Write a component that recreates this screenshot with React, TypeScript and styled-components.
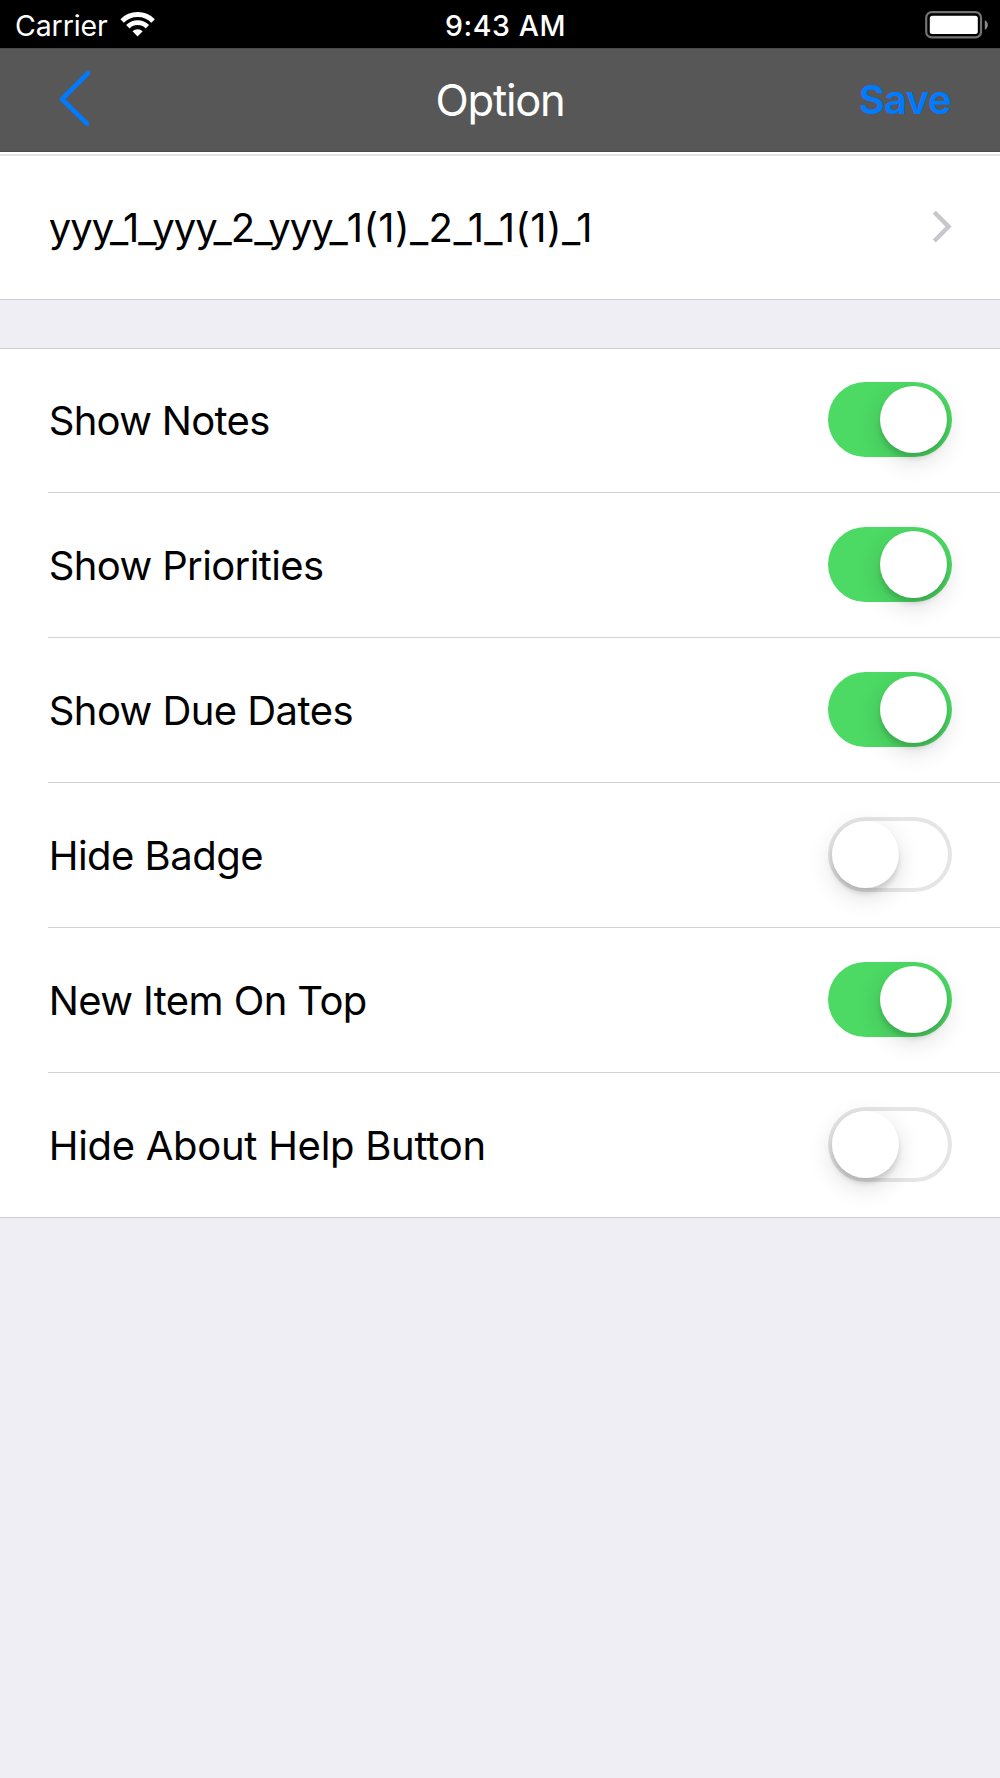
import React, { useState } from "react";
import styled, { createGlobalStyle } from "styled-components";

const GlobalStyle = createGlobalStyle`
  * { box-sizing: border-box; }
  body {
    margin: 0;
    background: #efeef4;
    font-family: Inter, "Liberation Sans", sans-serif;
    color: #000;
  }
  button {
    font: inherit;
    border: 0;
    padding: 0;
    background: none;
    display: flex;
  }
`;

const Screen = styled.div`
  width: 1000px;
  min-height: 1778px;
  display: flex;
  flex-direction: column;
  background: #efeef4;
`;

const StatusBar = styled.div`
  height: 48px;
  padding: 1px 12px 0 15px;
  display: grid;
  grid-template-columns: 1fr auto 1fr;
  align-items: center;
  background: #000;
  color: #fff;
  font-size: 28.5px;
`;

const Carrier = styled.div`
  display: flex;
  align-items: center;
  gap: 12px;
  letter-spacing: -0.1px;
  line-height: 36px;
  padding-top: 2px;
`;

const WifiIcon = styled.svg`
  display: block;
  width: 35px;
  height: 26px;
  margin-top: -3px;
`;

const Time = styled.div`
  font-weight: 500;
  letter-spacing: 0.6px;
  line-height: 36px;
  padding: 2px 0 0 8px;
`;

const BatteryIcon = styled.svg`
  display: block;
  justify-self: end;
  width: 64px;
  height: 28px;
`;

const NavBar = styled.header`
  height: 104px;
  padding: 0 49px 0 56px;
  display: grid;
  grid-template-columns: 1fr auto 1fr;
  align-items: center;
  background: #575757;
  border-top: 1px solid #4a4a4a;
  border-bottom: 1px solid #4c4c4c;
`;

const BackButton = styled.button`
  justify-self: start;
`;

const BackIcon = styled.svg`
  display: block;
  width: 40px;
  height: 60px;
  margin-top: -2px;
`;

const Title = styled.h1`
  margin: 0;
  padding-right: 7px;
  color: #fff;
  font-size: 43.5px;
  font-weight: 400;
  letter-spacing: -1.25px;
`;

const SaveButton = styled.button`
  && {
    justify-self: end;
    color: #007aff;
    font-size: 40px;
    font-weight: 600;
    letter-spacing: -0.6px;
    line-height: 50px;
  }
`;

const Group = styled.section<{ $first?: boolean }>`
  background: #fff;
  border-top: ${(p) => (p.$first ? "2px solid #e4e4e4" : "1px solid #cfced2")};
  border-bottom: 1px solid #cfced2;
  margin-top: ${(p) => (p.$first ? "0" : "48px")};
`;

const HeaderGap = styled.div`
  background: #fff;
  padding-top: 2px;
`;

const Row = styled.div`
  padding-left: 48px;
`;

const RowBody = styled.div<{ $height: number; $divided?: boolean; $lowered?: boolean }>`
  height: ${(p) => p.$height}px;
  padding-top: ${(p) => (p.$lowered ? 1 : 0)}px;
  padding-right: 48px;
  display: flex;
  align-items: center;
  justify-content: space-between;
  border-bottom: ${(p) => (p.$divided ? "1px solid #d1d1d6" : "0")};
`;

const Label = styled.span<{ $tracking?: number }>`
  font-size: 40px;
  line-height: 50px;
  letter-spacing: ${(p) => p.$tracking ?? 0}px;
  margin-left: 0.7px;
  white-space: nowrap;
`;

const Tracked = styled.span<{ $tracking: number }>`
  letter-spacing: ${(p) => p.$tracking}px;
`;

const Disclosure = styled.svg`
  display: block;
  width: 20px;
  height: 34px;
  margin-top: -2px;
`;

const Track = styled.button<{ $on: boolean }>`
  && {
    width: 124px;
    height: 75px;
    margin-top: -3px;
    padding: 0 5px 0 4px;
    border-radius: 38px;
    align-items: center;
    justify-content: ${(p) => (p.$on ? "flex-end" : "flex-start")};
    background: ${(p) => (p.$on ? "#4cd964" : "#fff")};
    box-shadow: ${(p) => (p.$on ? "none" : "inset 0 0 0 4px #e5e5e5")};
  }
`;

const Knob = styled.span`
  width: 67px;
  height: 67px;
  border-radius: 50%;
  background: #fff;
  box-shadow: 0 8px 24px rgba(0, 0, 0, 0.14), 0 5px 5px rgba(0, 0, 0, 0.13);
`;

type Option = { label: string; on: boolean; tracking: number };

const initialOptions: Option[] = [
  { label: "Show Notes", on: true, tracking: -0.69 },
  { label: "Show Priorities", on: true, tracking: -0.62 },
  { label: "Show Due Dates", on: true, tracking: -0.56 },
  { label: "Hide Badge", on: false, tracking: -0.52 },
  { label: "New Item On Top", on: true, tracking: -0.6 },
  { label: "Hide About Help Button", on: false, tracking: -0.28 },
];

export default function App() {
  const [options, setOptions] = useState(initialOptions);
  const toggle = (index: number) =>
    setOptions((list) => list.map((o, i) => (i === index ? { ...o, on: !o.on } : o)));
  const last = options.length - 1;

  return (
    <Screen>
      <GlobalStyle />
      <StatusBar>
        <Carrier>
          Carrier
          <WifiIcon viewBox="0 0 35 26">
            <g fill="none" stroke="#fff" strokeWidth="4.9">
              <path d="M2.1 9.9 A21.9 21.9 0 0 1 33.1 9.9" />
              <path d="M7.85 15.65 A13.8 13.8 0 0 1 27.35 15.65" />
            </g>
            <path d="M12.5 20.3 A7.2 7.2 0 0 1 22.7 20.3 L17.6 25.4 Z" fill="#fff" />
          </WifiIcon>
        </Carrier>
        <Time>9:43 AM</Time>
        <BatteryIcon viewBox="0 0 64 28">
          <rect x="2.2" y="1.2" width="54.8" height="25.2" rx="5.5" fill="none" stroke="#737373" strokeWidth="2.2" />
          <rect x="5.8" y="4.8" width="48" height="18.2" rx="2.5" fill="#fff" />
          <path d="M60.8 9.2 C64.8 11 64.8 17 60.8 18.8 Z" fill="#8c8c8c" />
        </BatteryIcon>
      </StatusBar>

      <NavBar>
        <BackButton aria-label="Back">
          <BackIcon viewBox="0 0 40 60" fill="none" stroke="#007aff" strokeWidth="4.8" strokeLinecap="round" strokeLinejoin="round">
            <path d="M31.8 4.4 L6 30.1 L31 54.6" />
          </BackIcon>
        </BackButton>
        <Title>Option</Title>
        <SaveButton>Save</SaveButton>
      </NavBar>

      <HeaderGap>
        <Group $first>
          <Row>
            <RowBody $height={143}>
              <Label>
                <Tracked $tracking={-1}>yyy_1_yyy_2_yyy_</Tracked>
                <Tracked $tracking={0.38}>1(1)_2_1_1(1)_1</Tracked>
              </Label>
              <Disclosure viewBox="0 0 20 34" fill="none" stroke="#c7c7cc" strokeWidth="4.4">
                <path d="M2.3 2.2 L16.6 16.6 L2.3 31" />
              </Disclosure>
            </RowBody>
          </Row>
        </Group>
      </HeaderGap>

      <Group>
        {options.map((option, i) => (
          <Row key={option.label}>
            <RowBody $height={i === 0 || i === last ? 144 : 145} $divided={i < last} $lowered={i > 0}>
              <Label $tracking={option.tracking}>{option.label}</Label>
              <Track $on={option.on} role="switch" aria-checked={option.on} aria-label={option.label} onClick={() => toggle(i)}>
                <Knob />
              </Track>
            </RowBody>
          </Row>
        ))}
      </Group>
    </Screen>
  );
}
